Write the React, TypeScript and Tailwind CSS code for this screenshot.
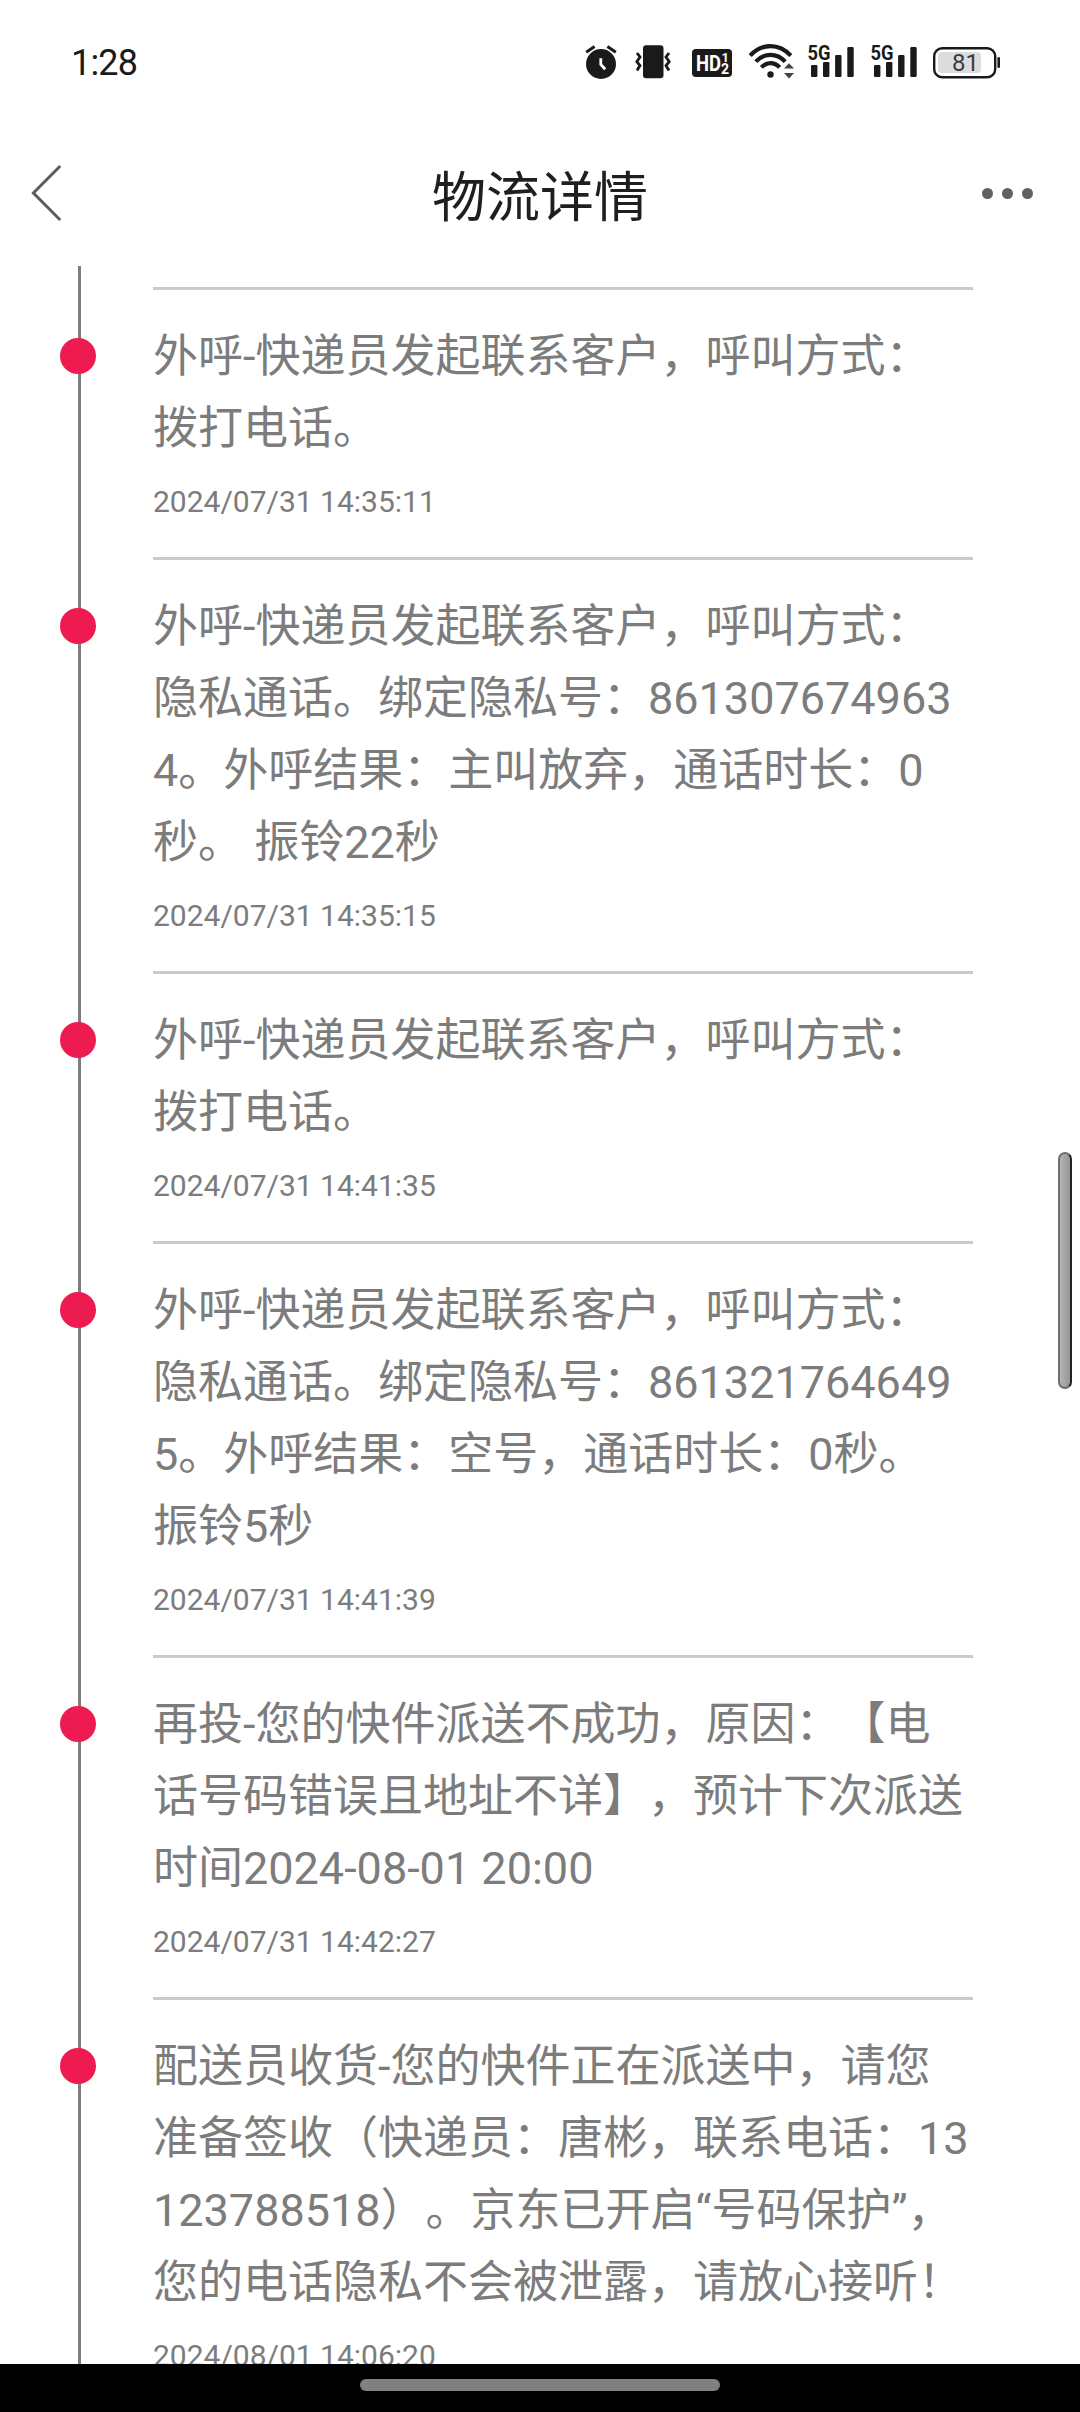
const events = [
  {
    lines: ['外呼-快递员发起联系客户，呼叫方式：', '拨打电话。'],
    time: '2024/07/31 14:35:11',
  },
  {
    lines: [
      '外呼-快递员发起联系客户，呼叫方式：',
      '隐私通话。绑定隐私号：861307674963',
      '4。外呼结果：主叫放弃，通话时长：0',
      '秒。 振铃22秒',
    ],
    time: '2024/07/31 14:35:15',
  },
  {
    lines: ['外呼-快递员发起联系客户，呼叫方式：', '拨打电话。'],
    time: '2024/07/31 14:41:35',
  },
  {
    lines: [
      '外呼-快递员发起联系客户，呼叫方式：',
      '隐私通话。绑定隐私号：861321764649',
      '5。外呼结果：空号，通话时长：0秒。',
      '振铃5秒',
    ],
    time: '2024/07/31 14:41:39',
  },
  {
    lines: [
      '再投-您的快件派送不成功，原因：【电',
      '话号码错误且地址不详】，预计下次派送',
      '时间2024-08-01 20:00',
    ],
    time: '2024/07/31 14:42:27',
  },
  {
    lines: [
      '配送员收货-您的快件正在派送中，请您',
      '准备签收（快递员：唐彬，联系电话：13',
      '123788518）。京东已开启“号码保护”，',
      '您的电话隐私不会被泄露，请放心接听！',
    ],
    time: '2024/08/01 14:06:20',
  },
];

function AlarmIcon() {
  return (
    <svg width="32" height="40" viewBox="0 0 32 40" fill="none">
      <circle cx="16" cy="22" r="15" fill="#1a1a1a" />
      <path d="M1.2 10.2 9.6 4.4M22.4 4.4l8.4 5.8" stroke="#1a1a1a" strokeWidth="3" />
      <path d="M15.8 16.2v6.3l4.4 4.7" stroke="#fff" strokeWidth="2.8" />
    </svg>
  );
}

function VibrateIcon() {
  return (
    <svg width="36" height="40" viewBox="0 0 36 40" fill="none">
      <rect x="8" y="3.2" width="20.5" height="33" rx="3" fill="#1a1a1a" />
      <path
        d="M2 11l3 4-3.2 4.6 3.2 4-3 4.8M34 11l-3 4 3.2 4.6-3.2 4 3 4.8"
        stroke="#1a1a1a"
        strokeWidth="2.8"
      />
    </svg>
  );
}

function HdIcon() {
  return (
    <svg width="40" height="40" viewBox="0 0 40 40" className="font-['Roboto',sans-serif]">
      <rect y="7" width="40" height="28" rx="4" fill="#1a1a1a" />
      <text x="4" y="29" fontSize="22" fontWeight="700" fill="#fff" textLength="25" lengthAdjust="spacingAndGlyphs">
        HD
      </text>
      <text x="29.5" y="20" fontSize="13" fontWeight="700" fill="#fff">
        1
      </text>
      <text x="29" y="32" fontSize="14" fontWeight="700" fill="#fff">
        2
      </text>
    </svg>
  );
}

function WifiIcon() {
  return (
    <svg width="46" height="40" viewBox="0 0 46 40" fill="none">
      <path d="M1.2 13.6C12.8.9 30.2.9 41.8 13.6" stroke="#1a1a1a" strokeWidth="4.2" />
      <path d="M6.8 19.6c8.4-9 21-9 29.4 0" stroke="#1a1a1a" strokeWidth="4.2" />
      <path d="M12.4 25.4c5.2-5.6 13-5.6 18.2 0" stroke="#1a1a1a" strokeWidth="4.2" />
      <circle cx="21.5" cy="32.5" r="3.2" fill="#1a1a1a" />
      <path d="M35 26.6l5-5.4 5 5.4zM35 31l5 5.4 5-5.4z" fill="#444" />
    </svg>
  );
}

function SignalIcon() {
  return (
    <svg width="47" height="40" viewBox="0 0 47 40" className="font-['Roboto',sans-serif]" fill="#1a1a1a">
      <text x="-0.5" y="18" fontSize="21" fontWeight="700" textLength="23" lengthAdjust="spacingAndGlyphs">
        5G
      </text>
      <rect x="3" y="23" width="6.4" height="12" rx="1.2" />
      <rect x="15" y="20" width="6.4" height="15" rx="1.2" />
      <rect x="27.1" y="13" width="6.4" height="22" rx="1.2" />
      <rect x="39.3" y="5" width="6.4" height="30" rx="1.2" />
    </svg>
  );
}

function BatteryIcon() {
  return (
    <svg width="68" height="40" viewBox="0 0 68 40" className="font-['Roboto',sans-serif]">
      <rect x="5" y="10" width="43" height="21" rx="4" fill="#dcdcdc" />
      <rect x="1.2" y="6.2" width="61" height="29" rx="8" fill="none" stroke="#1a1a1a" strokeWidth="2.4" />
      <rect x="64.4" y="15" width="2.6" height="11" rx="1.2" fill="#1a1a1a" />
      <text x="19" y="29" fontSize="24" fill="#3c3c3c" textLength="27">
        81
      </text>
    </svg>
  );
}

function StatusBar() {
  return (
    <div className="flex h-[124px] shrink-0 items-center pl-[71px] pr-[79px] text-[#1a1a1a]">
      <span className="pt-0.5 text-[36px] leading-10 tracking-[-0.8px] font-['Roboto',sans-serif]">1:28</span>
      <div className="ml-auto flex items-center">
        <AlarmIcon />
        <div className="ml-[18px] flex">
          <VibrateIcon />
        </div>
        <div className="ml-[21px] flex">
          <HdIcon />
        </div>
        <div className="ml-[17px] flex">
          <WifiIcon />
        </div>
        <div className="ml-[13px] flex gap-4">
          <SignalIcon />
          <SignalIcon />
        </div>
        <div className="ml-[15px] flex">
          <BatteryIcon />
        </div>
      </div>
    </div>
  );
}

function NavBar() {
  return (
    <div className="grid h-[142px] shrink-0 grid-cols-[1fr_auto_1fr] items-start pl-[30px] pr-[47px] pt-10">
      <svg width="32" height="58" viewBox="0 0 32 58" fill="none">
        <path d="M30.2 2 3.4 29l26.8 27" stroke="#5c5c5c" strokeWidth="3" />
      </svg>
      <h1 className="ml-[17px] pt-[3px] text-[54px] font-normal leading-[64px] text-[#1f1f1f]">物流详情</h1>
      <div className="flex justify-end gap-[9px] pt-6">
        <i className="size-[11px] rounded-full bg-[#62625c]" />
        <i className="size-[11px] rounded-full bg-[#62625c]" />
        <i className="size-[11px] rounded-full bg-[#62625c]" />
      </div>
    </div>
  );
}

function Event({ lines, time }: { lines: string[]; time: string }) {
  return (
    <li className="flex">
      <div className="relative w-[153px] shrink-0">
        <div className="ml-[78px] h-full w-[3px] bg-[#7f7f7f]" />
        <div className="absolute left-[60px] top-[51px] size-9 rounded-full bg-[#ee1b50]" />
      </div>
      <div className="w-[820px] border-t-[3px] border-[#cbcbcb] pb-[31px] pt-[31px] text-[#7c7c7c]">
        {lines.map((line) => (
          <p key={line} className="whitespace-pre text-[45px] leading-[72px]">
            {line}
          </p>
        ))}
        <time className="mt-[13px] block text-[30px] leading-[48px]">{time}</time>
      </div>
    </li>
  );
}

export default function App() {
  return (
    <div className="relative flex h-[2412px] w-[1080px] flex-col overflow-hidden bg-white font-['Roboto','Noto_Sans_CJK_SC',sans-serif] [text-spacing-trim:space-all]" lang="zh-CN">
      <StatusBar />
      <NavBar />
      <main className="min-h-0 flex-1 overflow-hidden">
        <div className="ml-[78px] h-[21px] w-[3px] bg-[#7f7f7f]" />
        <ul>
          {events.map((event) => (
            <Event key={event.time} lines={event.lines} time={event.time} />
          ))}
        </ul>
      </main>
      <div className="flex h-12 shrink-0 justify-center bg-black pt-[15px]">
        <div className="h-3 w-[360px] rounded-full bg-[#808080]" />
      </div>
      <div className="absolute left-[1058px] top-[1152px] h-[237px] w-[14px] rounded-full border-2 border-[#6e6e6e] border-r-[#222] bg-linear-to-r from-[#b4b4b4] to-[#959595]" />
    </div>
  );
}
